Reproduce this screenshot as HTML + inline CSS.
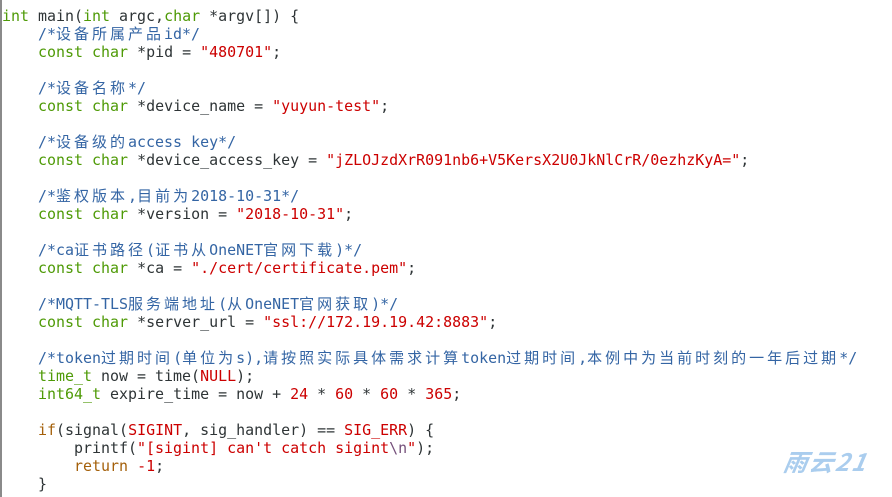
<!DOCTYPE html>
<html><head><meta charset="utf-8"><style>
html,body{margin:0;padding:0;background:#fff;width:892px;height:497px;overflow:hidden}
body{position:relative}
.bar{position:absolute;left:0;top:0;width:2px;height:497px;background:#8a8a8a}
pre{position:absolute;left:2px;top:7px;margin:0;font-family:"DejaVu Sans Mono","Liberation Mono",monospace;font-size:14.96px;line-height:18px;color:#2e3436;white-space:pre}
.k{color:#4e9a06}.c{color:#3465a4}.s{color:#cc0000}.f{color:#a4600a}.e{color:#75507b}
.z{font-family:"Noto Sans CJK SC","WenQuanYi Zen Hei",sans-serif;letter-spacing:3px;font-size:15px}
.wm{position:absolute;left:784px;top:443px;font-family:"Noto Sans CJK SC",sans-serif;font-size:24px;font-style:italic;font-weight:bold;color:#aacdee;letter-spacing:2px;transform:skewX(-10deg)}
</style></head><body>
<div class="bar"></div>
<pre><span class="k">int</span> main(<span class="k">int</span> argc,<span class="k">char</span> *argv[]) {
    <span class="c">/*<span class="z">设备所属产品</span>id*/</span>
    <span class="k">const</span> <span class="k">char</span> *pid = <span class="s">"480701"</span>;

    <span class="c">/*<span class="z">设备名称</span>*/</span>
    <span class="k">const</span> <span class="k">char</span> *device_name = <span class="s">"yuyun-test"</span>;

    <span class="c">/*<span class="z">设备级的</span>access key*/</span>
    <span class="k">const</span> <span class="k">char</span> *device_access_key = <span class="s">"jZLOJzdXrR091nb6+V5KersX2U0JkNlCrR/0ezhzKyA="</span>;

    <span class="c">/*<span class="z">鉴权版本</span>,<span class="z">目前为</span>2018-10-31*/</span>
    <span class="k">const</span> <span class="k">char</span> *version = <span class="s">"2018-10-31"</span>;

    <span class="c">/*ca<span class="z">证书路径</span>(<span class="z">证书从</span>OneNET<span class="z">官网下载</span>)*/</span>
    <span class="k">const</span> <span class="k">char</span> *ca = <span class="s">"./cert/certificate.pem"</span>;

    <span class="c">/*MQTT-TLS<span class="z">服务端地址</span>(<span class="z">从</span>OneNET<span class="z">官网获取</span>)*/</span>
    <span class="k">const</span> <span class="k">char</span> *server_url = <span class="s">"ssl://172.19.19.42:8883"</span>;

    <span class="c">/*token<span class="z">过期时间</span>(<span class="z">单位为</span>s),<span class="z">请按照实际具体需求计算</span>token<span class="z">过期时间</span>,<span class="z">本例中为当前时刻的一年后过期</span>*/</span>
    <span class="k">time_t</span> now = time(<span class="s">NULL</span>);
    <span class="k">int64_t</span> expire_time = now + <span class="s">24</span> * <span class="s">60</span> * <span class="s">60</span> * <span class="s">365</span>;

    <span class="f">if</span>(signal(<span class="s">SIGINT</span>, sig_handler) == <span class="s">SIG_ERR</span>) {
        printf(<span class="s">"[sigint] can't catch sigint<span class="e">\n</span>"</span>);
        <span class="f">return</span> <span class="s">-1</span>;
    }
</pre>
<div class="wm">雨云21</div>
</body></html>
